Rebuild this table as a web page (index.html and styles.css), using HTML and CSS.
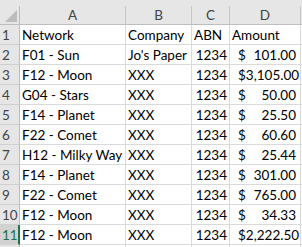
FILE: index.html
```html
<!DOCTYPE html>
<html>
<head>
<meta charset="utf-8">
<link rel="stylesheet" href="styles.css">
</head>
<body>
<div class="sheet">
  <div class="topstrip"></div>
  <div class="grid">
    <div class="corner"><svg width="12" height="12" viewBox="0 0 12 12"><polygon points="12,0 12,12 0,12" fill="#bdbdbd"/></svg></div>
    <div class="colhead">A</div>
    <div class="colhead">B</div>
    <div class="colhead">C</div>
    <div class="colhead">D</div>
    <div class="colhead rest"></div>

    <div class="rowhead">1</div><div class="cell">Network</div><div class="cell">Company</div><div class="cell">ABN</div><div class="cell">Amount</div><div class="cell rest"></div>
    <div class="rowhead">2</div><div class="cell">F01 - Sun</div><div class="cell">Jo's Paper</div><div class="cell num">1234</div><div class="cell acct"><span>$</span><span>101.00</span></div><div class="cell rest"></div>
    <div class="rowhead">3</div><div class="cell">F12 - Moon</div><div class="cell">XXX</div><div class="cell num">1234</div><div class="cell acct"><span>$</span><span>3,105.00</span></div><div class="cell rest"></div>
    <div class="rowhead">4</div><div class="cell">G04 - Stars</div><div class="cell">XXX</div><div class="cell num">1234</div><div class="cell acct"><span>$</span><span>50.00</span></div><div class="cell rest"></div>
    <div class="rowhead">5</div><div class="cell">F14 - Planet</div><div class="cell">XXX</div><div class="cell num">1234</div><div class="cell acct"><span>$</span><span>25.50</span></div><div class="cell rest"></div>
    <div class="rowhead">6</div><div class="cell">F22 - Comet</div><div class="cell">XXX</div><div class="cell num">1234</div><div class="cell acct"><span>$</span><span>60.60</span></div><div class="cell rest"></div>
    <div class="rowhead">7</div><div class="cell">H12 - Milky Way</div><div class="cell">XXX</div><div class="cell num">1234</div><div class="cell acct"><span>$</span><span>25.44</span></div><div class="cell rest"></div>
    <div class="rowhead">8</div><div class="cell">F14 - Planet</div><div class="cell">XXX</div><div class="cell num">1234</div><div class="cell acct"><span>$</span><span>301.00</span></div><div class="cell rest"></div>
    <div class="rowhead">9</div><div class="cell">F22 - Comet</div><div class="cell">XXX</div><div class="cell num">1234</div><div class="cell acct"><span>$</span><span>765.00</span></div><div class="cell rest"></div>
    <div class="rowhead">10</div><div class="cell">F12 - Moon</div><div class="cell">XXX</div><div class="cell num">1234</div><div class="cell acct"><span>$</span><span>34.33</span></div><div class="cell rest"></div>
    <div class="rowhead selected">11</div><div class="cell">F12 - Moon</div><div class="cell">XXX</div><div class="cell num">1234</div><div class="cell acct"><span>$</span><span>2,222.50</span></div><div class="cell rest"></div>
    <div class="rowhead"></div><div class="cell"></div><div class="cell"></div><div class="cell"></div><div class="cell"></div><div class="cell rest"></div>
  </div>
</div>
</body>
</html>
```
FILE: styles.css
```css
html, body {
  margin: 0;
  padding: 0;
  background: #ffffff;
  overflow: hidden;
}

.sheet {
  width: 302px;
  height: 247px;
  overflow: hidden;
  font-family: "Lato", "Liberation Sans", sans-serif;
  font-size: 13.5px;
  color: #000000;
}

.topstrip {
  height: 6px;
  background: #e6e6e6;
}

.grid {
  display: grid;
  grid-template-columns: 20px 106px 66px 38px 71px 1fr;
  grid-auto-rows: 20px;
  grid-template-rows: 19px;
}

.corner {
  background: #e6e6e6;
  border-right: 1px solid #bdbdbd;
  border-bottom: 1px solid #bdbdbd;
  box-sizing: border-box;
  display: flex;
  justify-content: flex-end;
  align-items: flex-end;
  padding: 0 2px 2px 0;
}

.colhead {
  background: #e6e6e6;
  border-right: 1px solid #c6c6c6;
  border-bottom: 1px solid #bdbdbd;
  box-sizing: border-box;
  text-align: center;
  line-height: 18px;
  color: #444444;
}

.colhead.rest {
  border-right: none;
}

.rowhead {
  background: #e6e6e6;
  border-right: 1px solid #bdbdbd;
  border-bottom: 1px solid #d0d0d0;
  box-sizing: border-box;
  padding: 1px 0 0 2px;
  line-height: 18px;
  color: #444444;
}

.rowhead.selected {
  background: #d2d2d2;
  color: #217346;
  border-right: 2px solid #217346;
}

.cell {
  border-right: 1px solid #dadada;
  border-bottom: 1px solid #dadada;
  box-sizing: border-box;
  padding: 1px 2px 0 2px;
  line-height: 18px;
  white-space: nowrap;
  overflow: hidden;
}

.cell.num {
  text-align: right;
}

.cell.acct {
  display: flex;
  justify-content: space-between;
  padding-left: 8px;
  padding-right: 4px;
}

.cell.rest {
  border-right: none;
}
```
